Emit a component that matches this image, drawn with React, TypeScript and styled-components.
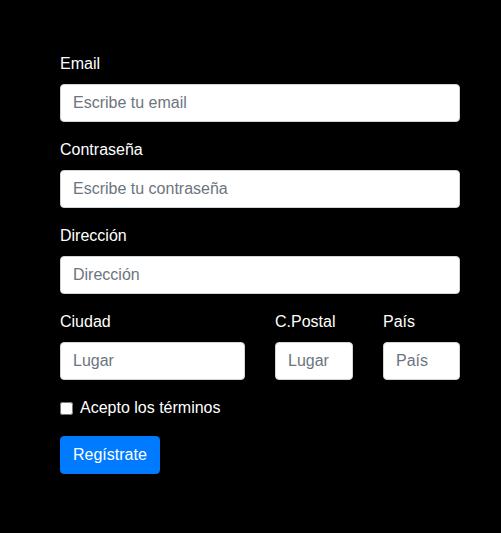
import React from "react";
import styled, { createGlobalStyle } from "styled-components";

const Global = createGlobalStyle`
  html, body { margin: 0; padding: 0; background: #000; }
  body { font-family: "Liberation Sans", Arial, sans-serif; font-size: 16px; line-height: 1.5; color: #fff; }
  * { box-sizing: border-box; }
`;

const Page = styled.div`
  background: #000;
  min-height: 533px;
  padding: 52px 41px 0 60px;
`;

const Form = styled.form`
  width: 400px;
`;

const Group = styled.div`
  margin-bottom: 16px;
`;

const Label = styled.label`
  display: block;
  margin-bottom: 8px;
  color: #fff;
  font-size: 16px;
  line-height: 24px;
`;

const Input = styled.input`
  display: block;
  width: 100%;
  height: 38px;
  padding: 6px 12px;
  font-family: inherit;
  font-size: 16px;
  line-height: 24px;
  color: #495057;
  background: #fff;
  border: 1px solid #ced4da;
  border-radius: 4px;
  outline: none;
  &::placeholder { color: #6c757d; opacity: 1; }
`;

const Row = styled.div`
  display: grid;
  grid-template-columns: 185px 78px 77px;
  column-gap: 30px;
`;

const Check = styled.div`
  display: flex;
  align-items: center;
  height: 24px;
  margin-bottom: 16px;
`;

const CheckBox = styled.input`
  width: 13px;
  height: 13px;
  margin: 0 7px 0 0;
`;

const CheckLabel = styled.label`
  color: #fff;
  font-size: 16px;
  line-height: 24px;
`;

const Button = styled.button`
  display: inline-block;
  height: 38px;
  padding: 6px 12px;
  font-family: inherit;
  font-size: 16px;
  line-height: 24px;
  color: #fff;
  background: #007bff;
  border: 1px solid #007bff;
  border-radius: 4px;
`;

export default function App() {
  return (
    <Page>
      <Global />
      <Form onSubmit={(e) => e.preventDefault()}>
        <Group>
          <Label>Email</Label>
          <Input type="email" placeholder="Escribe tu email" />
        </Group>
        <Group>
          <Label>Contraseña</Label>
          <Input type="password" placeholder="Escribe tu contraseña" />
        </Group>
        <Group>
          <Label>Dirección</Label>
          <Input type="text" placeholder="Dirección" />
        </Group>
        <Row>
          <Group>
            <Label>Ciudad</Label>
            <Input type="text" placeholder="Lugar" />
          </Group>
          <Group>
            <Label>C.Postal</Label>
            <Input type="text" placeholder="Lugar" />
          </Group>
          <Group>
            <Label>País</Label>
            <Input type="text" placeholder="País" />
          </Group>
        </Row>
        <Check>
          <CheckBox type="checkbox" id="terms" />
          <CheckLabel htmlFor="terms">Acepto los términos</CheckLabel>
        </Check>
        <Button type="submit">Regístrate</Button>
      </Form>
    </Page>
  );
}
